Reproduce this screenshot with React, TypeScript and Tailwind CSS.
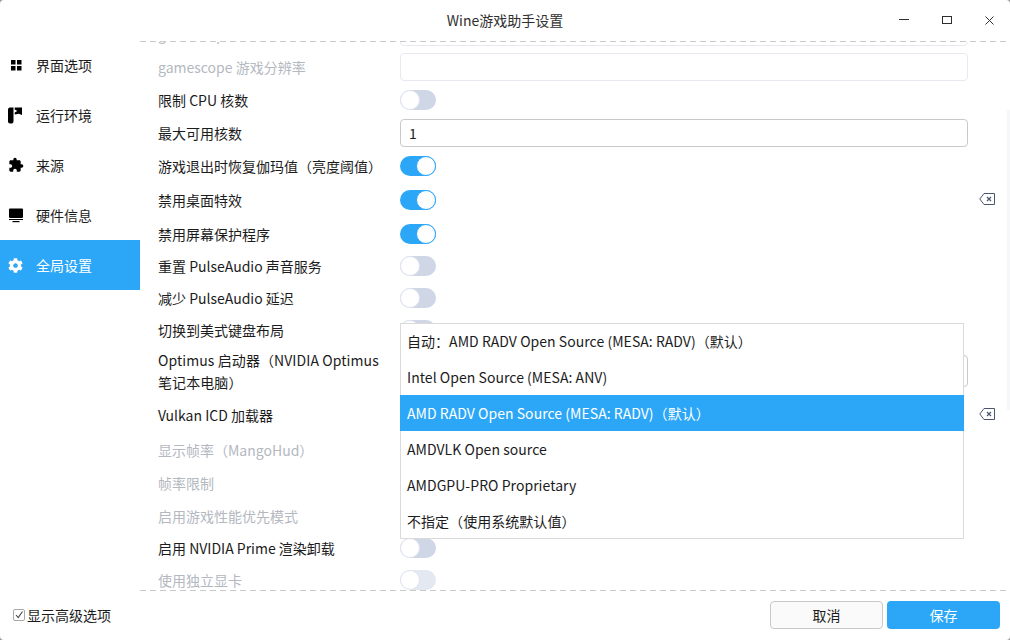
import { FaCog } from 'react-icons/fa';
import { MdExtension } from 'react-icons/md';

const dash = "h-px bg-[repeating-linear-gradient(90deg,#c9c9c9_0,#c9c9c9_6px,transparent_6px,transparent_10px)]";

function GridIcon() {
  return (
    <svg width="16" height="16" viewBox="0 0 16 16" fill="#000">
      <rect x="3" y="3" width="4.5" height="4.5" />
      <rect x="9" y="3" width="4.5" height="4.5" />
      <rect x="3" y="9" width="4.5" height="4.5" />
      <rect x="9" y="9" width="4.5" height="4.5" />
    </svg>
  );
}

function RuntimeIcon() {
  return (
    <svg width="16" height="18" viewBox="0 0 16 18" fill="#000">
      <path d="M0 3.5a2 2 0 0 1 2-2h3.5v14a2 2 0 0 1-2 2h-1.5a2 2 0 0 1-2-2z" />
      <path d="M6.7 1.5h7.3v7.5l-3.2-1.2-4.1.7v-2l2.6-1.4-2.6-1.6z" />
    </svg>
  );
}

function MonitorIcon() {
  return (
    <svg width="16" height="16" viewBox="0 0 16 16" fill="#000">
      <rect x="1" y="1.5" width="14" height="9.5" rx="1" />
      <rect x="1" y="12" width="14" height="1" />
      <rect x="4.5" y="14" width="7" height="1.2" />
    </svg>
  );
}

function ClearIcon() {
  return (
    <svg width="16" height="12" viewBox="0 0 16 12" fill="none" stroke="#4a566e" className="ml-[11px] -mt-[2px] shrink-0">
      <path d="M15.5.5H5L.8 6 5 11.5h10.5z" />
      <path d="M8 4l4 4M12 4l-4 4" strokeWidth="1.2" />
    </svg>
  );
}

function Toggle({ on, disabled }: { on?: boolean; disabled?: boolean }) {
  if (on) {
    return (
      <div className="w-9 h-5 rounded-full bg-[#2ca7f8] flex justify-end">
        <div className="w-5 h-5 rounded-full bg-white border border-[#2ca7f8]" />
      </div>
    );
  }
  return (
    <div className={`w-9 h-5 rounded-full ${disabled ? 'bg-[#e4e8f1]' : 'bg-[#cfd6e6]'}`}>
      <div className="w-5 h-5 rounded-full bg-white border border-[#e0e4ef]" />
    </div>
  );
}

function Field({ value, light }: { value?: string; light?: boolean }) {
  return (
    <div className={`w-full h-[28px] rounded-[4px] border bg-white px-2 flex items-center ${light ? 'border-[#e6e9f2]' : 'border-[#c9c9c9]'}`}>
      {value}
    </div>
  );
}

const rows = [
  { h: 'h-[36px]', label: 'gamescope 窗口分辨率', off: true, ctrl: <Field light />, labelCls: 'pt-[4px]' },
  { h: 'h-[34px]', label: 'gamescope 游戏分辨率', off: true, ctrl: <Field light /> },
  { h: 'h-[32px]', label: '限制 CPU 核数', ctrl: <Toggle /> },
  { h: 'h-[34px]', label: '最大可用核数', ctrl: <Field value="1" /> },
  { h: 'h-[32px]', label: '游戏退出时恢复伽玛值（亮度阈值）', ctrl: <Toggle on /> },
  { h: 'h-[36px]', label: '禁用桌面特效', ctrl: <Toggle on />, clear: true },
  { h: 'h-[32px]', label: '禁用屏幕保护程序', ctrl: <Toggle on /> },
  { h: 'h-[32px]', label: '重置 PulseAudio 声音服务', ctrl: <Toggle /> },
  { h: 'h-[32px]', label: '减少 PulseAudio 延迟', ctrl: <Toggle /> },
  { h: 'h-[32px]', label: '切换到美式键盘布局', ctrl: <Toggle /> },
  {
    h: 'h-[50px]',
    label: 'Optimus 启动器（NVIDIA Optimus 笔记本电脑）',
    labelCls: 'tracking-[0.08px]',
    ctrl: <div className="w-full h-[32px] rounded-[4px] border border-[#c9c9c9] bg-white" />,
  },
  {
    h: 'h-[38px]',
    label: 'Vulkan ICD 加载器',
    ctrl: <div className="w-[560px] h-[32px] rounded-[4px] border border-[#c9c9c9] bg-white" />,
    clear: true,
  },
  { h: 'h-[32px]', label: '显示帧率（MangoHud）', off: true, ctrl: <Toggle disabled /> },
  { h: 'h-[34px]', label: '帧率限制', off: true, ctrl: <Toggle disabled /> },
  { h: 'h-[32px]', label: '启用游戏性能优先模式', off: true, ctrl: <Toggle disabled /> },
  { h: 'h-[32px]', label: '启用 NVIDIA Prime 渲染卸载', ctrl: <Toggle /> },
  { h: 'h-[32px]', label: '使用独立显卡', off: true, ctrl: <Toggle disabled /> },
];

const nav = [
  { icon: <GridIcon />, label: '界面选项' },
  { icon: <RuntimeIcon />, label: '运行环境' },
  { icon: <MdExtension size={16} color="#000" />, label: '来源' },
  { icon: <MonitorIcon />, label: '硬件信息' },
  { icon: <FaCog size={15} color="#fff" />, label: '全局设置', active: true },
];

const options = [
  '自动：AMD RADV Open Source (MESA: RADV)（默认）',
  'Intel Open Source (MESA: ANV)',
  'AMD RADV Open Source (MESA: RADV)（默认）',
  'AMDVLK Open source',
  'AMDGPU-PRO Proprietary',
  '不指定（使用系统默认值）',
];

export default function App() {
  return (
    <div className="w-[1010px] h-[640px] bg-[#9a9a9a] overflow-hidden">
      <div className="w-full h-full bg-white rounded-[4px] overflow-hidden flex flex-col text-[14px] leading-[22px] text-[#1c1c1c] font-['Noto_Sans_CJK_SC','Noto_Sans',sans-serif]">
        {/* title bar */}
        <div className="h-[40px] shrink-0 relative flex items-center justify-center text-[#303030]">
          <span>Wine游戏助手设置</span>
          <svg width="96" height="14" viewBox="0 0 96 14" fill="none" stroke="#2e2e2e" className="absolute right-[15px] top-[13px]">
            <path d="M0 6.5h10" />
            <rect x="43.5" y="3.5" width="9" height="7" />
            <path d="M86.5 3.5l8 8M94.5 3.5l-8 8" />
          </svg>
        </div>

        <div className="h-[550px] shrink-0 flex">
          {/* sidebar */}
          <div className="w-[140px] shrink-0 flex flex-col">
            {nav.map((n) => (
              <div key={n.label} className={`h-[50px] flex items-center ${n.active ? 'bg-[#2ca7f8] text-white' : ''}`}>
                <div className="w-[36px] pl-[8px] flex">{n.icon}</div>
                <span>{n.label}</span>
              </div>
            ))}
          </div>

          {/* settings list */}
          <div className="flex-1 flex flex-col pt-px">
            <div className={dash} />
            <div className="flex-1 relative overflow-hidden">
              <div className="-mt-[28px] pl-[18px] flex flex-col">
                {rows.map((r) => (
                  <div key={r.label} className={`${r.h} shrink-0 flex items-center`}>
                    <div className={`w-[242px] shrink-0 pr-[20px] ${r.off ? 'text-[#b4b8c0]' : ''} ${r.labelCls ?? ''}`}>{r.label}</div>
                    <div className="w-[568px] shrink-0 flex items-center">{r.ctrl}</div>
                    {r.clear && <ClearIcon />}
                  </div>
                ))}
              </div>

              {/* open dropdown */}
              <div className="absolute left-[260px] top-[281px] w-[564px] h-[216px] bg-white shadow-[inset_0_0_0_1px_#dadada] flex flex-col tracking-[0.04px]">
                {options.map((o, i) => (
                  <div key={o} className={`h-[36px] shrink-0 flex items-center px-[7px] ${i === 2 ? 'bg-[#2ca7f8] text-white' : ''}`}>
                    {o}
                  </div>
                ))}
              </div>

              <div className="absolute right-0 top-[68px] w-[3px] h-[300px] bg-[#f6f7f8]" />
            </div>
          </div>
        </div>

        {/* footer */}
        <div className={`${dash} ml-[140px] shrink-0`} />
        <div className="flex-1 flex items-center justify-between pl-[13px] pr-[10px] pb-[1px]">
          <div className="flex items-center gap-[2px]">
            <svg width="12" height="12" viewBox="0 0 12 12" fill="none">
              <rect x="0.5" y="0.5" width="11" height="11" rx="1.5" stroke="#a8a8a8" />
              <path d="M3 6l2.2 2.6L9.5 2.5" stroke="#444" strokeWidth="1.1" />
            </svg>
            <span>显示高级选项</span>
          </div>
          <div className="flex gap-[4px]">
            <button className="w-[113px] h-[28px] rounded-[4px] border border-[#c9c9c9] bg-[#fafafa] text-[#1c1c1c]">取消</button>
            <button className="w-[113px] h-[28px] rounded-[4px] bg-[#2ca7f8] text-white">保存</button>
          </div>
        </div>
      </div>
    </div>
  );
}
